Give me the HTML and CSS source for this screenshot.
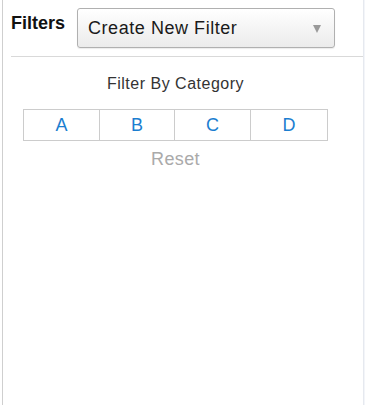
FILE: index.html
```html
<!DOCTYPE html>
<html>
<head>
<meta charset="utf-8">
<link rel="stylesheet" href="styles.css">
</head>
<body>
<div class="frame">
  <div class="panel">
    <div class="header">
      <div class="label">Filters</div>
      <div class="select">
        <span class="select-text">Create New Filter</span>
        <span class="arrow"></span>
      </div>
    </div>
    <div class="rule"></div>
    <div class="category">
      <div class="cat-title">Filter By Category</div>
      <div class="btn-group">
        <div class="btn">A</div>
        <div class="btn">B</div>
        <div class="btn">C</div>
        <div class="btn">D</div>
      </div>
      <div class="reset">Reset</div>
    </div>
  </div>
  <div class="side"></div>
</div>
</body>
</html>
```
FILE: styles.css
```css
html, body {
  margin: 0;
  padding: 0;
  background: #fff;
  font-family: "Liberation Sans", Arial, sans-serif;
}
.frame {
  display: flex;
  height: 405px;
}
.panel {
  margin-left: 2px;
  width: 360px;
  border-left: 1px solid #cfcfcf;
  border-right: 1px solid #e6e9ef;
  background: #fff;
}
.side {
  flex: 1;
  background: #f3f5f9;
}
.header {
  display: flex;
  align-items: flex-start;
  padding: 8px 0 0 8px;
  gap: 11px;
}
.label {
  width: 55px;
  margin-top: 4px;
  font-size: 18px;
  line-height: 22px;
  font-weight: bold;
  color: #111;
}
.select {
  width: 233px;
  height: 38px;
  border: 1px solid #b0b0b0;
  border-radius: 3px;
  background: linear-gradient(#ffffff, #ebebeb);
  box-shadow: 0 1px 1px rgba(0,0,0,0.08);
  display: flex;
  align-items: center;
  justify-content: space-between;
  padding: 0 13px 0 10px;
}
.select-text {
  font-size: 18px;
  line-height: 38px;
  letter-spacing: 0.55px;
  color: #1a1a1a;
}
.arrow {
  width: 0;
  height: 0;
  border-left: 4.5px solid transparent;
  border-right: 4.5px solid transparent;
  border-top: 8px solid #9a9a9a;
  margin-top: 2px;
}
.rule {
  height: 1px;
  background: #d9d9d9;
  margin: 8px 0 0 8px;
}
.category {
  margin-left: 20px;
  width: 305px;
  text-align: center;
}
.cat-title {
  margin-top: 17px;
  font-size: 16px;
  line-height: 20px;
  letter-spacing: 0.5px;
  color: #333;
}
.btn-group {
  margin-top: 15px;
  display: grid;
  grid-template-columns: 75px 75px 76px 77px;
  border: 1px solid #cccccc;
  height: 30px;
}
.btn {
  font-size: 18px;
  line-height: 30px;
  color: #1b7ed0;
  border-left: 1px solid #cccccc;
}
.btn:first-child {
  border-left: none;
}
.reset {
  margin-top: 7px;
  font-size: 18px;
  line-height: 22px;
  letter-spacing: 0.4px;
  color: #aaaaaa;
}
```
